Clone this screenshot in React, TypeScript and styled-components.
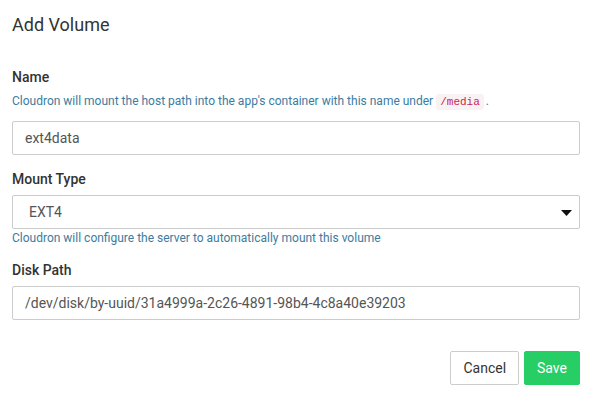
import React from "react";
import styled, { createGlobalStyle } from "styled-components";

const GlobalStyle = createGlobalStyle`
  * { box-sizing: border-box; }
  body {
    margin: 0;
    background: #fff;
    font-family: Roboto, "Liberation Sans", Arial, sans-serif;
    font-size: 14px;
    line-height: 20px;
    color: #333;
  }
`;

const Modal = styled.div`
  width: 592px;
  height: 399px;
  display: flex;
  flex-direction: column;
  background: #fff;
`;

const Header = styled.div`
  padding: 15px 12px 15px;
`;

const Title = styled.h4`
  margin: 0;
  font-size: 18px;
  font-weight: 400;
  line-height: 20px;
  color: #333;
`;

const Body = styled.div`
  padding: 17px 12px 0;
  display: flex;
  flex-direction: column;
`;

const FormGroup = styled.div<{ $gap?: number }>`
  display: flex;
  flex-direction: column;
  margin-bottom: ${(p) => p.$gap ?? 14}px;
`;

const Label = styled.label`
  font-weight: 500;
  font-size: 14px;
  line-height: 20px;
  margin-bottom: 6px;
  color: #333;
`;

const Help = styled.p<{ $below?: boolean }>`
  margin: ${(p) => (p.$below ? "1px 0 0" : "0 0 10px")};
  font-size: 12px;
  line-height: 17px;
  color: #3b7ca0;
`;

const Code = styled.code`
  font-family: "Liberation Mono", "DejaVu Sans Mono", monospace;
  font-size: 11px;
  color: #c7254e;
  background: #f9f2f4;
  padding: 2px 4px;
  border-radius: 3px;
  margin: 0 2px 0 3px;
`;

const Input = styled.input`
  height: 34px;
  width: 100%;
  padding: 6px 12px;
  font-family: inherit;
  font-size: 14px;
  color: #555;
  border: 1px solid #ccc;
  border-radius: 2px;
  background: #fff;
  outline: none;
`;

const SelectWrap = styled.div`
  position: relative;
`;

const Select = styled.select`
  appearance: none;
  -webkit-appearance: none;
  height: 34px;
  width: 100%;
  padding: 6px 12px 6px 16px;
  font-family: inherit;
  font-size: 14px;
  color: #555;
  border: 1px solid #ccc;
  border-radius: 2px;
  background: #fff;
  outline: none;
`;

const Caret = styled.svg`
  position: absolute;
  right: 8px;
  top: 15px;
  pointer-events: none;
`;

const Footer = styled.div`
  display: flex;
  justify-content: flex-end;
  gap: 5px;
  padding: 31px 12px 0;
`;

const Button = styled.button<{ $primary?: boolean }>`
  height: 34px;
  padding: 6px 12px;
  font-family: inherit;
  font-size: 14px;
  line-height: 20px;
  border-radius: 2px;
  border: 1px solid ${(p) => (p.$primary ? "#27ce65" : "#ccc")};
  background: ${(p) => (p.$primary ? "#27ce65" : "#fff")};
  color: ${(p) => (p.$primary ? "#fff" : "#333")};
  cursor: pointer;
`;

export default function App() {
  return (
    <>
      <GlobalStyle />
      <Modal>
        <Header>
          <Title>Add Volume</Title>
        </Header>
        <Body>
          <FormGroup>
            <Label>Name</Label>
            <Help>
              Cloudron will mount the host path into the app's container with this name under
              <Code>/media</Code>.
            </Help>
            <Input defaultValue="ext4data" />
          </FormGroup>
          <FormGroup $gap={13}>
            <Label>Mount Type</Label>
            <SelectWrap>
              <Select defaultValue="ext4">
                <option value="ext4">EXT4</option>
              </Select>
              <Caret width="11" height="6" viewBox="0 0 11 6">
                <path d="M0 0 L11 0 L5.5 6 Z" fill="#111" />
              </Caret>
            </SelectWrap>
            <Help $below>Cloudron will configure the server to automatically mount this volume</Help>
          </FormGroup>
          <FormGroup $gap={0}>
            <Label>Disk Path</Label>
            <Input defaultValue="/dev/disk/by-uuid/31a4999a-2c26-4891-98b4-4c8a40e39203" />
          </FormGroup>
        </Body>
        <Footer>
          <Button>Cancel</Button>
          <Button $primary>Save</Button>
        </Footer>
      </Modal>
    </>
  );
}
